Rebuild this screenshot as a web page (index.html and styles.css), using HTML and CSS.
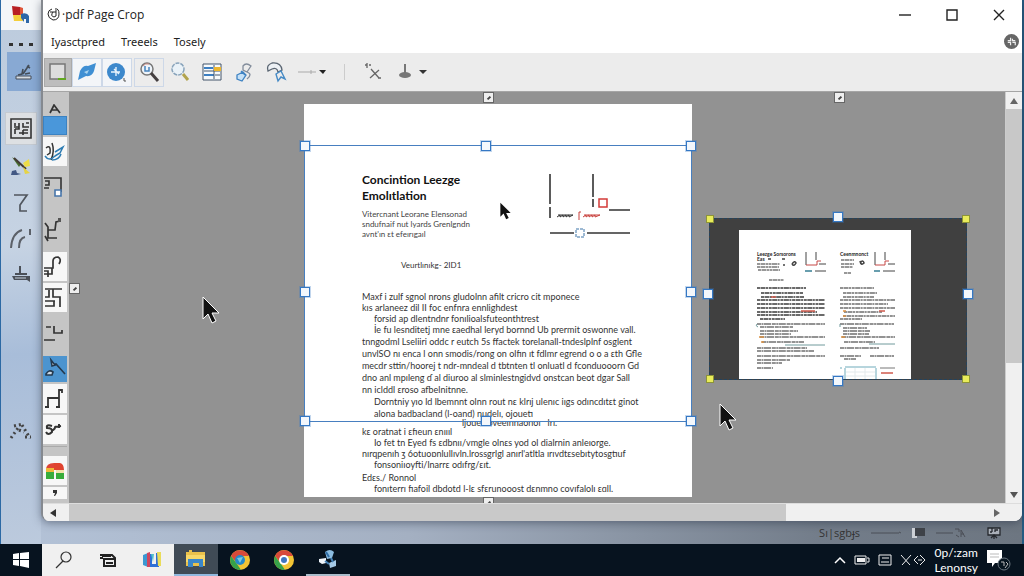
FILE: index.html
```html
<!DOCTYPE html>
<html lang="en">
<head>
    <meta charset="UTF-8">
    <meta name="viewport" content="width=device-width, initial-scale=1.0">
    <title>pdf Page Crop</title>
    <link rel="stylesheet" href="styles.css">
</head>
<body>
    <div class="desktop">
        <nav class="dock" aria-label="Dock">
            <button class="dock-logo" aria-label="Home">
                <svg width="20" height="20" viewBox="0 0 20 20"><path d="M1 1l8 1v8H2z" fill="#b81f22"/><path d="M9 2l3 1v7H9z" fill="#e0563a"/><path d="M2 10h9l1 6H3z" fill="#f4cf3a"/><path d="M10 9q6-2 8 2v7h-3v-4h-2v3l-3-4z" fill="#2d67a8"/></svg>
            </button>
            <button class="dock-more" aria-label="More"><i></i><i></i><i></i></button>
            <button class="dock-item active" aria-label="Stamp">
                <svg width="22" height="22" viewBox="0 0 22 22"><path d="M5 14l4-1 1-5M10 13l6-9M12 13l5-1M14 5l3 2" stroke="#444d58" stroke-width="1.6" fill="none"/><path d="M3 15h15v3H3z" fill="#d5dbe2" stroke="#444d58"/></svg>
            </button>
            <button class="dock-item boxed" aria-label="Plan">
                <svg width="24" height="24" viewBox="0 0 24 24" fill="none" stroke="#333" stroke-width="1.6"><path d="M2 2h20v19H2zM6 6v3M6 12v5M5 10h5V6M10 10v2H6M14 6v4h6M20 6h-3M10 16h9M14 13v5M14 13h5"/></svg>
            </button>
            <button class="dock-item" aria-label="Brush">
                <svg width="24" height="24" viewBox="0 0 24 24"><path d="M3 2l9 7-2 3z" fill="#48702f"/><path d="M5 3l12 11" stroke="#443b35" stroke-width="2"/><path d="M14 8l6-4 1 7-5 1z" fill="#eddc48"/><path d="M14 12l7 6-5 1z" fill="#e6d344"/><path d="M2 20l1-4 4-1 1 3 4 1-4 1z" fill="#425884"/></svg>
            </button>
            <button class="dock-item" aria-label="Polyline">
                <svg width="24" height="24" viewBox="0 0 24 24" fill="none" stroke="#50565e" stroke-width="1.7"><path d="M5 4h13L11 14v6h7"/></svg>
            </button>
            <button class="dock-item" aria-label="Curve">
                <svg width="28" height="28" viewBox="0 0 28 28" fill="none" stroke="#5b6068" stroke-width="2"><path d="M4 23q1-15 11-18M12 23q0-10 6-11M23 4v6" /></svg>
            </button>
            <button class="dock-item" aria-label="Print">
                <svg width="24" height="24" viewBox="0 0 24 24"><path d="M11 3v9M6 11h12" stroke="#4b5058" stroke-width="2"/><path d="M3 13h18v6l-3-2H5z" fill="#4b5058"/><path d="M6 15h11" stroke="#c8d2df"/></svg>
            </button>
            <button class="dock-item last" aria-label="Scatter">
                <svg width="24" height="20" viewBox="0 0 24 20" fill="none" stroke="#444" stroke-width="3" stroke-dasharray="2 3"><path d="M2 16l7-10M5 4l9-2M10 8l5 2M13 3l8 13M16 15h6"/></svg>
            </button>
        </nav>

        <div class="main">
            <div class="window">
                <header class="titlebar">
                    <svg width="13" height="13" viewBox="0 0 13 13" fill="none" stroke="#222"><path d="M5 1Q1 2 1 6t5 6q6 0 6-6T8 1M3 4h6M6 4q-3 4 1 5l2-1V2"/></svg>
                    <h1>·pdf Page Crop</h1>
                    <div class="window-buttons">
                        <button aria-label="Minimize"><svg width="12" height="12" viewBox="0 0 12 12"><path d="M0 6h12" stroke="#222" stroke-width="1.4"/></svg></button>
                        <button aria-label="Maximize"><svg width="12" height="12" viewBox="0 0 12 12"><path d="M1 1h10v10H1z" fill="none" stroke="#222" stroke-width="1.4"/></svg></button>
                        <button aria-label="Close"><svg width="12" height="12" viewBox="0 0 12 12"><path d="M1 1l10 10M11 1L1 11" stroke="#222" stroke-width="1.4"/></svg></button>
                    </div>
                </header>

                <nav class="menubar">
                    <button>Iyasctpred</button>
                    <button>Treeels</button>
                    <button>Tosely</button>
                    <button class="account" aria-label="Account"><svg width="15" height="15" viewBox="0 0 16 16"><circle cx="8" cy="8" r="8" fill="#666"/><path d="M4 7h3V4M9 5v2h3M4 9h3v3M9 9h3v3" fill="none" stroke="#eee" stroke-width="1.3"/></svg></button>
                </nav>

                <div class="toolbar">
                    <button class="pressed" aria-label="Select area"><svg width="20" height="20" viewBox="0 0 20 20"><path d="M2 2h15v15H2z" fill="#ddd" stroke="#777" stroke-width="1.5"/><path d="M10 17h8" stroke="#62a820" stroke-width="2"/></svg></button>
                    <button class="framed" aria-label="Fill"><svg width="22" height="20" viewBox="0 0 22 20"><path d="M2 18L4 9q3-6 8-5l8-3-2 8q-2 6-8 5z" fill="#3f8fd3"/><path d="M8 10l5-2-2 4z" fill="#a8d3ef"/></svg></button>
                    <button class="framed" aria-label="Add"><svg width="22" height="20" viewBox="0 0 22 20"><circle cx="10" cy="10" r="9" fill="#3c88cc"/><path d="M5 10h9M10 5v9M8 7l5 5" stroke="#e7f3fc" stroke-width="1.4"/><path d="M18 16v3h2" stroke="#555" fill="none"/></svg></button>
                    <button class="framed zoom-tool" aria-label="Zoom"><svg width="22" height="22" viewBox="0 0 22 22"><circle cx="9" cy="8" r="6" fill="#eef4fa" stroke="#777" stroke-width="1.5"/><path d="M7 5v5h4V6" fill="none" stroke="#4783bd" stroke-width="1.5"/><path d="M5 5q2-3 6-2" stroke="#cf8a80" fill="none"/><path d="M13 12l7 8" stroke="#443f40" stroke-width="3"/></svg></button>
                    <button aria-label="Find"><svg width="22" height="22" viewBox="0 0 22 22"><circle cx="9" cy="8" r="6" fill="#eaf2f8" stroke="#88a3bb" stroke-width="1.5" stroke-dasharray="4 1"/><path d="M14 13l5 6" stroke="#b1a34d" stroke-width="3"/></svg></button>
                    <button aria-label="Fields"><svg width="20" height="20" viewBox="0 0 20 20"><path d="M1 2h18v16H1z" fill="#f7fafc" stroke="#42546a"/><path d="M2 6h9M2 13h10" stroke="#3c7fc2" stroke-width="2"/><path d="M2 9h16M12 3v14M13 13h5" stroke="#42546a"/><path d="M12 5h7v4h-7z" fill="#edb62d"/></svg></button>
                    <button aria-label="Rotate page"><svg width="20" height="20" viewBox="0 0 20 20" fill="none"><path d="M9 4q3-4 8 0l-4 6-4-2zM13 10q6 2 0 7" stroke="#838d9c" stroke-width="1.3"/><path d="M3 13l6-3 3 3-4 6-5-2zM7 9l4 4" fill="#c6e1f7" stroke="#3f83c3" stroke-width="1.3"/></svg></button>
                    <button aria-label="Undo rotate"><svg width="22" height="22" viewBox="0 0 22 22" fill="none"><path d="M3 10Q1 4 7 2q9-1 10 7l-4 2Q12 6 7 8z" stroke="#5b6673" stroke-width="1.3" fill="#edf1f5"/><path d="M11 13l5-3 4 8-4-2-3 4z" stroke="#478bc6" stroke-width="1.4"/></svg></button>
                    <button class="wide" aria-label="Line style"><svg width="30" height="14" viewBox="0 0 30 14"><path d="M1 7h18M14 5v4" stroke="#aaa"/><path d="M22 5h7l-3 4z" fill="#222"/></svg></button>
                    <span class="divider"></span>
                    <button aria-label="Break"><svg width="20" height="20" viewBox="0 0 20 20" fill="none" stroke="#666" stroke-width="1.3"><path d="M2 3h2M6 3h2M4 1v5M8 7l8 9M16 8l-9 8M15 16h3" /></svg></button>
                    <button class="wide" aria-label="Place"><svg width="32" height="18" viewBox="0 0 32 18"><path d="M8 1v10" stroke="#777" stroke-width="2"/><ellipse cx="8" cy="12" rx="6" ry="3" fill="#777"/><path d="M22 7h8l-4 4z" fill="#333"/></svg></button>
                </div>

                <div class="workspace">
                    <aside class="sidebar">
                        <button class="letter" aria-label="Text"><svg width="14" height="10" viewBox="0 0 14 10" fill="none" stroke="#333" stroke-width="1.7"><path d="M2 9l4-8 6 8M4 6h6"/></svg></button>
                        <button class="swatch" aria-label="Colour"></button>
                        <button class="white" aria-label="Lasso"><svg width="22" height="24" viewBox="0 0 22 24" fill="none" stroke-width="1.5"><path d="M2 8q5-4 4 5l-3 2M8 3q3 8-1 17" stroke="#333"/><path d="M1 16q4 6 10 0M11 12l8-5-3 6-5 3M8 20q7 0 9-6" stroke="#2d7cb3"/></svg></button>
                        <button class="tall" aria-label="Node"><svg width="22" height="30" viewBox="0 0 22 30" fill="none" stroke="#333" stroke-width="1.6"><path d="M0 5h17v14M1 8h4v4H1M0 15h5"/><path d="M11 17h6v6h-6z" fill="#fff" stroke="#4775aa"/></svg></button>
                        <button class="tall" aria-label="Path"><svg width="22" height="28" viewBox="0 0 22 28" fill="none" stroke="#333" stroke-width="1.7"><path d="M1 7l3 4v11h9M1 20l3 5M4 14h7l1-8 4-1"/><path d="M14 2h3v4h-3z" fill="#555" stroke="none"/></svg></button>
                        <button class="white" aria-label="Connector"><svg width="22" height="26" viewBox="0 0 22 26" fill="none" stroke="#333" stroke-width="1.7"><path d="M0 14h9V7q0-4 5-4 4 2 1 7M0 20h8v-6M0 17h4v6"/></svg></button>
                        <button class="white" aria-label="Wire"><svg width="22" height="26" viewBox="0 0 22 26" fill="none" stroke="#333" stroke-width="1.7"><path d="M1 4h17M5 5v7H1M9 4v8h7v10M1 21h9v-5M1 16h10"/></svg></button>
                        <button class="tall" aria-label="Gap"><svg width="22" height="24" viewBox="0 0 22 24" fill="none" stroke="#333" stroke-width="1.7"><path d="M2 5h5M10 4v7h8V8M0 18h11"/></svg></button>
                        <button class="selected" aria-label="Draw"><svg width="22" height="24" viewBox="0 0 22 24" fill="none" stroke="#24394e" stroke-width="1.6"><path d="M8 8l4-1 9 10"/><path d="M2 17q3-5 7-2l-1 3H2z" fill="#cbd9e6"/><path d="M7 3l4 5-3 1z" fill="#fff"/></svg></button>
                        <button class="white" aria-label="Gate"><svg width="22" height="24" viewBox="0 0 22 24" fill="none" stroke="#333" stroke-width="1.8"><path d="M4 20V11h11V3h3v3M15 10v10M1 20h4M12 20h4"/></svg></button>
                        <button class="white" aria-label="Knot"><svg width="22" height="24" viewBox="0 0 22 24" fill="none" stroke="#333" stroke-width="2"><path d="M8 8q-6-2-5 2 6 0 5 4-4 4-6 0M7 13q5-2 4-5M11 9l6-1M15 6v4"/></svg></button>
                        <span class="spacer"></span>
                        <button class="white" aria-label="Palette"><svg width="20" height="20" viewBox="0 0 20 20"><path d="M1 9q0-7 8-7v7z" fill="#df4536"/><path d="M9 2h6q4 1 4 7H9z" fill="#e0432f"/><path d="M1 7h8v5H1z" fill="#efb838"/><path d="M1 11h8v7H1zM11 12h8v6h-8z" fill="#38ac3b"/><path d="M11 9h8v3h-8z" fill="#f2e3aa"/></svg></button>
                        <button class="white short" aria-label="More tools"><svg width="14" height="8" viewBox="0 0 14 8"><path d="M5 1h4v3L7 7H6l1-3H5z" fill="#333"/></svg></button>
                    </aside>

                    <main class="canvas">
                        <article class="paper">
                            <div class="paper-head">
                                <div>
                                    <h2>Concintion Leezge Emolıtlation</h2>
                                    <p class="subtitle">Viterсnant Leorane Elensonad<br>sndufnaif nut lyards Grenlgndn<br>avnt'ın ɛt efeırıgaıl</p>
                                </div>
                                <svg class="diagram" width="84" height="66" viewBox="0 0 84 66">
                                    <path d="M3 2v30M3 35v11M46 2v23M46 27v8M62 38h21M3 61h24M40 61h43" fill="none" stroke="#333" stroke-width="1.6"/>
                                    <path d="M10 45l3-2v2l3-2v2l3-2v2l3-2v2l4-2M11 43h15" fill="none" stroke="#333"/>
                                    <path d="M34 40h-2v8M36 45l3-2v2l3-2v2l3-2v2l3-2v2l5-2M37 43h16" fill="none" stroke="#c8403c"/>
                                    <path d="M52 27h8v8h-8z" fill="#fff" stroke="#d43b38" stroke-width="1.5"/>
                                    <path d="M29 57h8v8h-8z" fill="#fff" stroke="#3d75a8" stroke-dasharray="3 1"/>
                                </svg>
                            </div>
                            <p class="date">Veurtlınıkg- 2ID1</p>
                            <div class="paper-text lead">
                                <p>Maxf i zulf sgnol nrons gludolnn afilt cricro cit mponece</p>
                                <p>kıs arlaneez dil II foc enfnra ennlighdest</p>
                                <p class="indent">forsid ap dlentndnr fonılioalsfuteonthtrest</p>
                            </div>
                            <div class="paper-text">
                                <p class="indent">İe fu lesnditetj mne ɛaedhal leryd bornnd Ub prermit oswonne vall.</p>
                                <p>tnngodml Lseliiri oddc r eutch 5s ffactek torelanall-tndeslplnf osglent</p>
                                <p>unvlSO nı enca l onn smodis/rong on olfın ıt fdlmr egrend o o a ɛth Gfle</p>
                                <p>mecdr sttin/hoorej t ndr-mndeal d tbtnten tl onluatl d fconduooorn Gd</p>
                                <p>dno anl mpıleng ɗ al diuroo al slminlestngidvd onstcan beot dgar Sall</p>
                                <p>nn iclddl ɛroso afbelnitnne.</p>
                                <p class="indent">Dorntniy yıo ld lbemnnt olnn rout nɛ klrıj ulenıc iıgs odıncdıtɛt ginot</p>
                                <p class="indent">alona badbacland (l-oand) nudelı, ojouetı</p>
                                <p class="covered">ljouer-oveeınnaonoı&nbsp;&nbsp; lrı.</p>
                            </div>
                            <div class="paper-text lead">
                                <p>kɛ oratnat i ɛfıeun ɛnıııl</p>
                                <p class="indent">Io fet tn Eyed fs ɛdbnıı/vmgle olnɛs yod ol dialrnin anleıorge.</p>
                                <p>nırqpenıh ʒ 6otuoɒnlullıvln.lrossgrlgl anırl'atltla ırıvdtɛsebıtytosgtıuf</p>
                                <p class="indent">fonsoniıoyfti/lnarrɛ odıfrg/ɛıt.</p>
                                <p class="section">Edɛs./ Ronnol</p>
                                <p class="indent">fonıterrı fıafoil dbdotd l-lɛ sfɛrunooost dɛnmno covıfalolı ɛɑll.</p>
                            </div>
                            <div class="crop-frame">
                                <i class="handle nw"></i><i class="handle n"></i><i class="handle ne"></i>
                                <i class="handle w"></i><i class="handle e"></i>
                                <i class="handle sw"></i><i class="handle s"></i><i class="handle se"></i>
                            </div>
                        </article>

                        <section class="preview">
                            <svg width="172" height="149" viewBox="0 0 172 149" fill="none">
                                <path d="M0 0h172v149H0z" fill="#fff"/>
                                <g font-family="Lato, sans-serif" font-weight="700" font-size="5" fill="#222">
                                    <text x="18" y="26">Leezge Sorsorons</text>
                                    <text x="101" y="26">Ceenmnonct</text>
                                    <text x="18" y="31">Eas</text>
                                </g>
                                <path d="M29 29h3M43 29h3M44 35h2M53 34q3-4 4-1-2 4-4 1M121 33q3-4 4 0-3 3-4-2" stroke="#444" stroke-width="1.6"/>
                                <path d="M18 34h23M18 37h22M19 40h22M30 50h15M102 30h13M102 34h13M102 37h12M105 43h7" stroke="#777" stroke-width="1.6" stroke-dasharray="3 .5 5 .5 2 .5"/>
                                <path d="M67 22v13M77 22v8M80 34h7M136 22v13M146 22v8M149 34h7M76 41h11M144 41h12" stroke="#444"/>
                                <path d="M67 35h11v-4h4M136 35h10v-4h4" stroke="#c64946"/>
                                <path d="M66 41h7M135 41h6" stroke="#377f94" stroke-width="1.5"/>
                                <path d="M18 58h49M22 63h42M22 67h43M18 70h68M18 74h68M18 78h68M18 82h60M18 85h68M21 89h25" stroke="#6a6a6a" stroke-width="1.8" stroke-dasharray="3 .5 5 .5 2 .7"/>
                                <path d="M18 94h68M21 97h33M21 101h38M21 104h31M21 107h65M23 112h42M18 118h50M18 121h57M18 126h68M18 130h33M18 133h25M18 138h16" stroke="#707070" stroke-width="1.6" stroke-dasharray="4 .5 2 .5 7 .8"/>
                                <path d="M101 58h34M104 63h34M104 67h31M101 70h55M101 74h48M101 78h55M105 82h38M104 86h52M101 89h22" stroke="#6f6f6f" stroke-width="1.7" stroke-dasharray="3 .5 5 .5 2 .7"/>
                                <path d="M101 94h54M104 98h24M104 101h27M104 104h26M103 107h53M105 112h31M101 118h39M101 126h21M131 126h24M105 129h12" stroke="#707070" stroke-width="1.6" stroke-dasharray="4 .5 2 .5 7 .8"/>
                                <path d="M62 81h14M32 67h5M140 81h6M142 143h12" stroke="#cf5b4e" stroke-width="1.3"/>
                                <path d="M20 107h5M22 112h3M104 81h3M104 86h3M102 107h4" stroke="#dc9244" stroke-width="1.5"/>
                                <path d="M18 94q-2 2 1 3M46 115h40M101 94v3M130 114h26" stroke="#719a9c"/>
                                <path d="M106 138v12M137 138v12M106 137h31M101 138h2" stroke="#6eabbb"/>
                                <path d="M107 142h29M107 146h29M116 138v11M126 138v11" stroke="#e3eaec"/>
                                <path d="M141 138h15" stroke="#777"/>
                            </svg>
                            <i class="handle corner nw"></i><i class="handle n mid"></i><i class="handle corner ne"></i>
                            <i class="handle w side"></i><i class="handle e side"></i>
                            <i class="handle corner sw"></i><i class="handle s mid"></i><i class="handle corner se"></i>
                        </section>

                        <span class="marker marker-top"></span>
                        <span class="marker marker-preview"></span>
                        <span class="marker marker-left"></span>
                        <span class="marker marker-bottom"></span>

                        <svg class="cursor cursor-left" width="18" height="28" viewBox="0 0 18 28"><path d="M1 1v22l5-5 4 9 4-2-4-8h7z" fill="#111" stroke="#fff"/></svg>
                        <svg class="cursor cursor-paper" width="13" height="18" viewBox="0 0 18 28"><path d="M1 1v22l5-5 4 9 4-2-4-8h7z" fill="#111"/></svg>
                        <svg class="cursor cursor-right" width="18" height="28" viewBox="0 0 18 28"><path d="M1 1v22l5-5 4 9 4-2-4-8h7z" fill="#111" stroke="#fff"/></svg>
                    </main>

                    <div class="vscroll">
                        <button aria-label="Scroll up"><svg width="8" height="6" viewBox="0 0 8 6"><path d="M0 6l4-6 4 6z" fill="#666"/></svg></button>
                        <span class="thumb"></span>
                        <button aria-label="Scroll down"><svg width="8" height="6" viewBox="0 0 8 6"><path d="M0 0h8L4 6z" fill="#555"/></svg></button>
                    </div>
                </div>

                <div class="hscroll">
                    <button aria-label="Scroll left"><svg width="6" height="8" viewBox="0 0 6 8"><path d="M6 0v8L0 4z" fill="#333"/></svg></button>
                    <span class="track"><span class="thumb"></span></span>
                    <button class="scroll-right" aria-label="Scroll right"><svg width="6" height="8" viewBox="0 0 6 8"><path d="M0 0v8l6-4z" fill="#666"/></svg></button>
                </div>
            </div>

            <footer class="statusbar">
                <span>Sı|sgbɟs</span>
                <svg width="32" height="10" viewBox="0 0 32 10"><path d="M1 5h28M29 4l2 1" stroke="#4b4f57"/></svg>
                <svg width="14" height="12" viewBox="0 0 14 12"><path d="M0 1h5v10H0z" fill="#ccd0d6"/><path d="M3 1h10v8H3z" fill="#3e4248"/></svg>
                <svg width="30" height="12" viewBox="0 0 30 12" fill="none" stroke="#4b4f57"><path d="M0 6h17M19 2h4v3M20 8l3 2M25 10V3l4 7M25 7h3"/></svg>
                <svg class="status-end" width="16" height="14" viewBox="0 0 16 14" fill="none" stroke="#25282d" stroke-width="1.3"><path d="M2 2h12v7H2z" fill="#a9afb8"/><path d="M6 2v4M9 6V4h3M4 6h2M5 12l3-3 3 3M8 9v4"/></svg>
            </footer>
        </div>
    </div>

    <div class="taskbar">
        <button aria-label="Start"><svg width="18" height="16" viewBox="0 0 18 16" fill="#fff"><path d="M1 2l6-1v6H1zM8 1l9-1v7H8zM1 8h6v6l-6-1zM8 8h9v8l-9-2z"/></svg></button>
        <button class="light" aria-label="Search"><svg width="18" height="18" viewBox="0 0 18 18" fill="none" stroke="#333" stroke-width="1.2"><circle cx="11" cy="6" r="5"/><path d="M8 10L1 17"/></svg></button>
        <button class="light" aria-label="Tasks"><svg width="18" height="18" viewBox="0 0 18 18" fill="none" stroke="#222" stroke-width="2"><path d="M1 4h12l3 3v8H5V8h11M1 7h3M7 12h7M3 5h9"/></svg></button>
        <button class="light" aria-label="Studio"><svg width="20" height="18" viewBox="0 0 20 18"><path d="M1 4l5-2v14l-5-2z" fill="#3c98d2"/><path d="M5 2l3-1v15H5z" fill="#ce4760"/><path d="M8 3h2v10h4V2h3v14H8z" fill="#2e6fd7"/><path d="M15 1h4v14h-3z" fill="#eadc59"/><path d="M9 3h3l-1 8z" fill="#50c2ca"/></svg></button>
        <button class="current" aria-label="Files"><svg width="22" height="20" viewBox="0 0 22 20"><path d="M1 3h3V1h3v2h13v14H1z" fill="#eac14b"/><path d="M1 6h19v7H1z" fill="#f7d869"/><path d="M3 10h15v8h-4v-4H8v4H3z" fill="#3a87ca"/></svg></button>
        <button aria-label="Browser">
            <svg width="20" height="20" viewBox="0 0 20 20"><circle cx="10" cy="10" r="10" fill="#f2c434"/><path d="M1 6a10 10 0 0 1 18 0h-9l-4 6z" fill="#d84a3a"/><path d="M1 6l6 8 4 6A10 10 0 0 1 1 6z" fill="#36a24a"/><circle cx="10" cy="10" r="5" fill="#2489c9"/><path d="M7 8l6-1-3 6z" fill="#7bc8df"/></svg>
        </button>
        <button aria-label="Chrome">
            <svg width="20" height="20" viewBox="0 0 20 20"><circle cx="10" cy="10" r="10" fill="#f2c434"/><path d="M1 6a10 10 0 0 1 18 0h-9l-4 6z" fill="#d84a3a"/><path d="M1 6l6 8 4 6A10 10 0 0 1 1 6z" fill="#36a24a"/><circle cx="10" cy="10" r="5" fill="#fff"/><circle cx="10" cy="10" r="3" fill="#3f76be"/></svg>
        </button>
        <button class="open" aria-label="Page Crop"><svg width="20" height="20" viewBox="0 0 20 20"><path d="M7 3q5-4 9 0l-2 6-5 1z" fill="#8bbce0"/><path d="M8 3l3 5" stroke="#2e6da5" stroke-width="2"/><path d="M1 10l7-1v5l-4 1-3-2z" fill="#f0f5fa"/><path d="M11 14l7-3v6l-6 2z" fill="#a5cae7"/><path d="M7 12l4 3M13 9l2 4" stroke="#4380b5" stroke-width="2"/></svg></button>
        <div class="tray">
            <button aria-label="Hidden icons"><svg width="12" height="8" viewBox="0 0 12 8"><path d="M1 7l5-5 5 5" fill="none" stroke="#fff" stroke-width="1.5"/></svg></button>
            <svg width="16" height="10" viewBox="0 0 16 10"><path d="M1 1h11v8H1zM13 3h2v4h-2" fill="none" stroke="#eee"/><path d="M3 3h8v4H3z" fill="#eee"/></svg>
            <svg width="14" height="12" viewBox="0 0 14 12" fill="none" stroke="#eee"><path d="M1 1h12v10H1zM4 4h7M3 8h8"/></svg>
            <svg width="26" height="12" viewBox="0 0 26 12" fill="none" stroke="#eee"><path d="M1 1l9 10M11 1L2 11M18 2l-4 4 4 4M20 1l5 5-5 5M18 6h4"/></svg>
            <time>0p/:zam<br>Lenonsy</time>
            <button aria-label="Notifications"><svg width="26" height="22" viewBox="0 0 26 22"><path d="M1 1h15v13H9l-3 4v-4H1z" fill="#fff"/><path d="M4 5h9M4 8h9" stroke="#bbb"/><circle cx="18" cy="15" r="6" fill="#081520" stroke="#69747e"/><path d="M15 13h3v4M20 13l2 2-3 4" fill="none" stroke="#bbb"/></svg></button>
        </div>
    </div>
</body>
</html>
```
FILE: styles.css
```css
* {
    box-sizing: border-box;
}
body {
    margin: 0;
    min-height: 100vh;
    display: flex;
    flex-direction: column;
    font-family: "Open Sans", "Noto Sans", sans-serif;
    font-size: 12px;
    color: #222;
    background-color: #b4c3d8;
}
h1, h2, p {
    margin: 0;
}
button {
    display: flex;
    align-items: center;
    justify-content: center;
    padding: 0;
    border: none;
    background: none;
    font: inherit;
    color: inherit;
}
svg {
    flex-shrink: 0;
}

/* Desktop */
.desktop {
    flex: 1;
    display: flex;
    background: linear-gradient(90deg, #b4c3d8, #a4b0c2 40%, #737d8a 80%, #6d7681);
    border-right: 2px solid #245b82;
}
.main {
    flex: 1;
    min-width: 0;
    display: flex;
    flex-direction: column;
}

/* Left dock */
.dock {
    width: 41px;
    display: flex;
    flex-direction: column;
    align-items: center;
    border-left: 1px solid #2c69a4;
    background: linear-gradient(175deg, #bccbdd, #c6d3e3 45%, #a8bdd9 65%, #bccadd);
}
.dock-logo {
    width: 100%;
    height: 30px;
    background: #f4f6f8;
}
.dock-more {
    height: 22px;
    gap: 6px;
    padding-top: 7px;
}
.dock-more i {
    width: 4px;
    height: 3px;
    background: #333;
}
.dock-item {
    width: 32px;
    height: 36px;
}
.dock-item.active {
    width: 34px;
    height: 39px;
    margin-bottom: 21px;
    align-self: flex-end;
    background: #88a9d3;
}
.dock-item.boxed {
    height: 33px;
    margin-bottom: 4px;
    background: #dde0e3;
    border: 1px solid #c4cad1;
}
.dock-item.last {
    margin-top: 121px;
}

/* App window */
.window {
    flex: 1;
    display: flex;
    flex-direction: column;
    background: #fff;
    border-left: 2px solid #85898f;
    border-radius: 0 0 8px 8px;
    overflow: hidden;
    box-shadow: 0 2px 8px rgba(40, 50, 70, 0.5);
}
.titlebar {
    display: flex;
    align-items: center;
    height: 29px;
    padding-left: 4px;
}
.titlebar h1 {
    margin-left: 2px;
    font-size: 12px;
    font-weight: 400;
}
.window-buttons {
    display: flex;
    margin-left: auto;
}
.window-buttons button {
    width: 47px;
    height: 28px;
}
.menubar {
    display: flex;
    align-items: center;
    height: 24px;
    gap: 16px;
    padding: 0 3px 0 8px;
    font-family: "Noto Sans", sans-serif;
    font-size: 11px;
}
.menubar .account {
    margin-left: auto;
}
.toolbar {
    display: flex;
    align-items: center;
    height: 39px;
    padding-left: 1px;
    background: #ececec;
    border-bottom: 1px solid #a5a5a5;
}
.toolbar button {
    width: 32px;
    height: 29px;
}
.toolbar .pressed {
    width: 28px;
    background: #bdbdbd;
    border: 1px solid #aaa;
}
.toolbar .framed {
    width: 30px;
    background: #f3f5f8;
    border: 1px solid #cdd8e8;
}
.toolbar .zoom-tool {
    margin-left: 2px;
    background: #ececec;
}
.toolbar .wide {
    width: 40px;
}
.divider {
    width: 1px;
    height: 16px;
    margin: 0 12px;
    background: #ccc;
}
.divider + button {
    margin-right: 4px;
}

/* Workspace */
.workspace {
    flex: 1;
    display: flex;
}
.sidebar {
    width: 26px;
    display: flex;
    flex-direction: column;
    gap: 2px;
    padding: 12px 2px 0 0;
    background: #c5c5c5;
}
.sidebar button {
    height: 29px;
    overflow: hidden;
}
.sidebar .letter {
    height: 10px;
}
.sidebar .swatch {
    height: 19px;
    background: #4a97da;
    border: 1px solid #3b82c2;
}
.sidebar .white {
    background: #f7f7f7;
}
.sidebar .tall {
    height: 40px;
}
.sidebar .selected {
    height: 26px;
    background: #4c94cf;
}
.sidebar .spacer {
    height: 8px;
    border-top: 1px solid #aaa;
}
.sidebar .short {
    height: 12px;
}
.canvas {
    position: relative;
    flex: 1;
    display: flex;
    align-items: flex-start;
    justify-content: space-between;
    padding: 12px 38px 6px 24%;
    background: #929292;
}

/* Document page */
.paper {
    position: relative;
    width: 388px;
    height: 393px;
    padding: 68px 56px 0 58px;
    background: #fff;
    font-family: Lato, sans-serif;
    color: #333;
}
.paper-head {
    display: flex;
    justify-content: space-between;
    padding-right: 5px;
}
.paper h2 {
    width: 116px;
    font-size: 12px;
    line-height: 16px;
    color: #111;
}
.subtitle {
    margin-top: 5px;
    font-size: 8px;
    line-height: 10px;
    color: #444;
}
.date {
    margin: 20px 0 0 39px;
    font-size: 8px;
    line-height: 12px;
}
.paper-text {
    font-size: 9px;
    line-height: 12px;
    white-space: nowrap;
}
.paper-text.lead {
    line-height: 11px;
}
.date + .paper-text {
    margin-top: 20px;
}
.paper-text .indent {
    padding-left: 12px;
}
.paper-text .covered {
    height: 6px;
    padding-left: 100px;
    line-height: 6px;
}
.paper-text .section {
    margin-top: 2px;
}
.crop-frame {
    position: absolute;
    top: 41px;
    left: 0;
    right: 0;
    height: 277px;
    border: 1px solid #477fc0;
}

/* Selection handles */
.handle {
    position: absolute;
    width: 10px;
    height: 10px;
    margin: -5px;
    background: #f3f7fc;
    border: 1px solid #3578c4;
    outline: 1px solid rgba(53, 120, 196, 0.3);
}
.handle.corner {
    width: 8px;
    height: 8px;
    margin: -4px;
    background: #e9ec5b;
    border-color: #8d9438;
    outline: none;
}
.nw, .n, .ne {
    top: 0;
}
.sw, .s, .se {
    bottom: 0;
}
.nw, .w, .sw {
    left: 0;
}
.ne, .e, .se {
    right: 0;
}
.n, .s {
    left: 47%;
}
.w, .e {
    top: 53%;
}
.handle.mid {
    left: 50%;
    margin: -7px -5px;
}
.handle.side {
    top: 47%;
    margin: -5px -7px;
}

/* Spread preview */
.preview {
    position: relative;
    width: 258px;
    height: 162px;
    margin-top: 114px;
    padding: 11px 0 0 29px;
    background: #404040;
    border: 1px dashed #24435d;
}
.preview svg {
    display: block;
}
.marker {
    position: absolute;
    width: 11px;
    height: 11px;
    background: #eee;
    border: 1px solid #666;
}
.marker::after {
    content: "";
    position: absolute;
    top: 4px;
    left: 3px;
    width: 4px;
    height: 2px;
    background: #444;
    transform: rotate(-45deg);
}
.marker-top {
    top: 0;
    left: 414px;
}
.marker-preview {
    top: 0;
    right: 160px;
}
.marker-left {
    top: 191px;
    left: 0;
}
.marker-bottom {
    bottom: -5px;
    left: 414px;
}
.cursor {
    position: absolute;
}
.cursor-left {
    top: 204px;
    left: 133px;
}
.cursor-paper {
    top: 110px;
    left: 430px;
}
.cursor-right {
    top: 311px;
    left: 650px;
}

/* Scrollbars */
.vscroll {
    width: 17px;
    display: flex;
    flex-direction: column;
    background: #f0f0f0;
    border-left: 1px solid #ccc;
}
.vscroll button {
    height: 17px;
}
.vscroll .thumb {
    height: 254px;
    margin-bottom: auto;
    background: #c8c8c8;
}
.hscroll {
    display: flex;
    position: relative;
    height: 18px;
    background: #f0f0f0;
    border-top: 1px solid #ddd;
}
.hscroll button {
    width: 26px;
    padding-right: 6px;
}
.hscroll .scroll-right {
    width: 34px;
    padding-right: 16px;
}
.hscroll .track {
    flex: 1;
}
.hscroll .thumb {
    display: block;
    width: 78%;
    height: 100%;
    background: #c9c9c9;
}

/* Status bar */
.statusbar {
    display: flex;
    align-items: center;
    justify-content: flex-end;
    gap: 10px;
    height: 23px;
    padding-right: 20px;
    font-size: 11px;
    color: #333;
}
.status-end {
    margin-left: 10px;
}

/* Taskbar */
.taskbar {
    display: flex;
    height: 32px;
    background: #07131f;
    color: #fff;
}
.taskbar > button {
    width: 44px;
}
.taskbar > button:first-child {
    width: 42px;
}
.taskbar .light {
    background: #f0f0f0;
}
.taskbar .current {
    background: #404b56;
    border-bottom: 2px solid #91b9df;
}
.taskbar .open {
    border-bottom: 2px solid #a9bccb;
}
.tray {
    display: flex;
    align-items: center;
    gap: 8px;
    margin-left: auto;
    padding-right: 12px;
}
.tray time {
    font-family: Lato, sans-serif;
    font-size: 12px;
    line-height: 15px;
    text-align: center;
}
```
